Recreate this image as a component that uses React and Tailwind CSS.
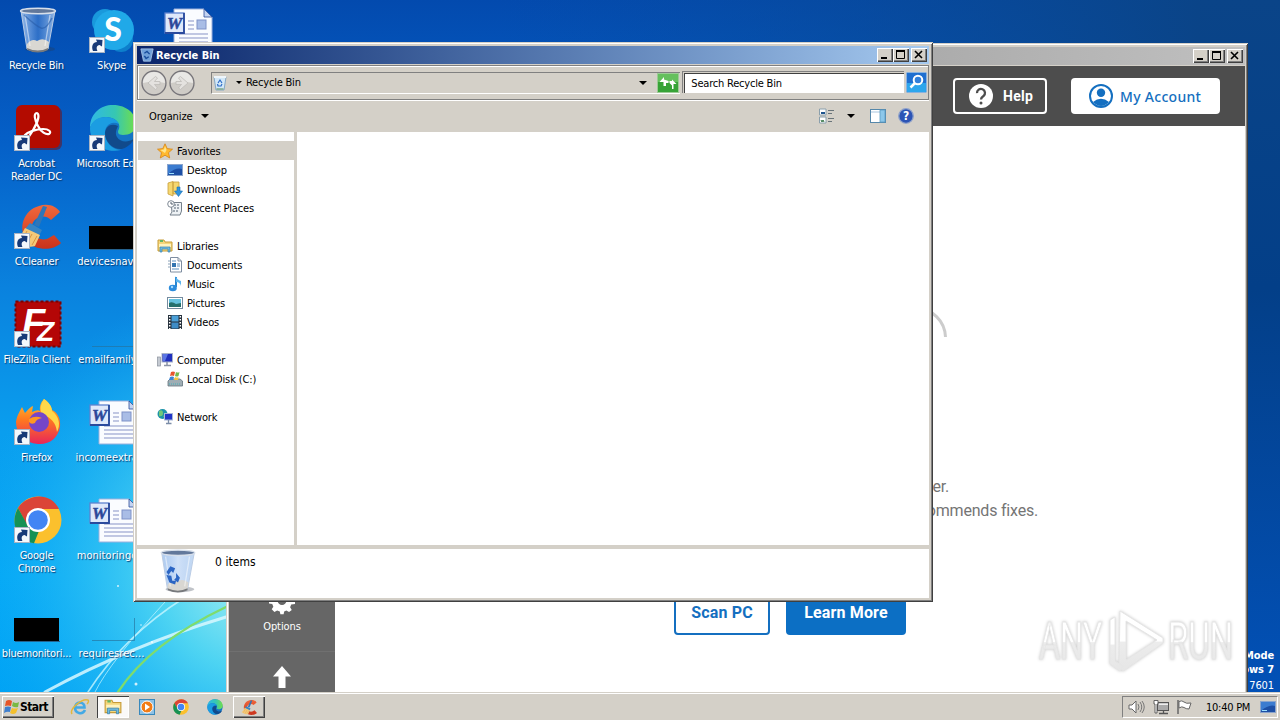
import React from 'react';
import clsx from 'clsx';

const UI = "font-['DejaVu_Sans_Condensed','DejaVu_Sans',sans-serif] text-[11px] leading-[13px] tracking-[-0.2px]";

/* ---------- desktop icons ---------- */

const Shortcut = () => (
  <g transform="translate(0 31)">
    <rect x="0.5" y="0.5" width="15" height="15" fill="#f4f8fc" stroke="#a9b4c4" />
    <path d="M4 14C2 9 4 5 8 5L7 2.500 13.500 3 13 9.500 10.500 8C7.500 8.500 7 11 8.500 14Z" fill="#173a78" />
  </g>
);

const Art = ({ children, shortcut }) => (
  <svg width="50" height="50" viewBox="0 0 50 50" className="block shrink-0 overflow-visible">
    {children}
    {shortcut && <Shortcut />}
  </svg>
);

const BinShape = ({ arrows }) => (
  <g>
    <ellipse cx="26" cy="43" rx="15" ry="3" fill="#303848" opacity=".3" />
    <path d="M7 5 13 43Q24 48 34 43L41 5Z" fill="url(#binGlass)" stroke="#b9cbe4" strokeWidth="1" />
    <path d="M13 38Q18 32 23 35 29 31 35 36L34 43Q24 47 13 43Z" fill="#d9d7d2" />
    <path d="M13 42Q24 47 34 42L34 44Q24 49 13.500 44Z" fill="#77797c" />
    <path d="M11 9 16 40M36 9 31 40" stroke="#fff" strokeWidth="1.300" opacity=".5" />
    <path d="M10 9Q22 20 27 22T38 12" stroke="#275ca8" fill="none" strokeWidth="1.500" opacity={arrows ? 0 : 0.6} />
    <ellipse cx="24" cy="5" rx="17.500" ry="2.800" fill="#62789b" stroke="#d7dfea" strokeWidth="1.400" />
    {arrows && (
      <g fill="#2c66c4">
        <path d="M12 25 16 19 21 21 19 26 17 24 14 28Z" />
        <path d="M12 28 17 29 18 34 22 34 21 38 15 36Z" />
        <path d="M22 26 26 31 24 36 20 33 22 31Z" />
      </g>
    )}
  </g>
);

const SkypeArt = () => (
  <Art shortcut>
    <circle cx="16" cy="16" r="13" fill="#1999dc" />
    <circle cx="32" cy="34" r="12" fill="#0d7fcc" />
    <circle cx="25" cy="24" r="20" fill="#20a9e8" />
    <text x="24" y="35" textAnchor="middle" fill="#fff" className="font-[Lato,sans-serif] text-[32px] font-black">S</text>
  </Art>
);

const WordArt = () => (
  <Art>
    <path d="M10 3H40L48 11V46H10Z" fill="#fafcff" stroke="#9bb0dc" />
    <path d="M40 3V11H48Z" fill="#c4d4f2" stroke="#2c4c98" strokeWidth=".8" />
    <path d="M24 15H30M24 19H30M24 23H30M15 28H44M15 32H44M15 36H44M15 40H44" stroke="#8793c6" />
    <rect x="33" y="14" width="9" height="9" fill="#a9bde6" stroke="#7f92c8" />
    <rect x="1" y="7" width="19" height="20" fill="#dfe8fa" stroke="#5f83cf" strokeWidth="1.300" />
    <path d="M1 27H20V7" stroke="#2a4a9d" fill="none" strokeWidth="1.800" />
    <text x="10.500" y="23" textAnchor="middle" fill="#2b4799" stroke="#2b4799" strokeWidth=".5" className="font-['Liberation_Serif',serif] text-[17px] font-bold italic">W</text>
  </Art>
);

const AcrobatArt = () => (
  <Art shortcut>
    <rect x="3" y="3" width="45" height="43" rx="6" fill="#7c0a05" opacity=".5" />
    <rect x="2" y="1" width="44" height="43" rx="6" fill="#b30b00" />
    <path d="M23 9C19 9 21 17 24 22 27 28 32 31 35 30 38 28 35 25 29 25 22 25 14 28 11 31 8 35 12 37 16 31 20 25 26 14 24 10Q23.500 9 23 9Z" fill="none" stroke="#fff" strokeWidth="2.200" />
  </Art>
);

const EdgeShape = () => (
  <g>
    <circle cx="24" cy="24" r="23" fill="#1474c4" />
    <path d="M1 24C1 9 12 1 24 1 38 1 47 10 47 20 47 28 40 31 34 31 29 31 28 28 30 25 32 18 25 13 17 13 9 13 3 18 1 24Z" fill="url(#edgeTop)" />
    <path d="M1 24C3 16 10 13 17 13 23 13 28 16 30 20 22 16 15 22 16 31 17 40 25 46 32 46 14 50 1 38 1 24Z" fill="#1b9de2" />
    <path d="M16 29C16 38 24 46 33 45 39 43 43 39 45 35 38 39 31 38 28 33 26 30 27 26 29 22 22 19 17 22 16 29Z" fill="#114a8b" />
  </g>
);

const CCleanerShape = () => (
  <g>
    <path d="M46 10 37 18C31 12 21 14 18 23 15 33 24 39 33 37L40 33 47 41C38 50 20 48 13 39 3 26 10 8 25 4 34 1 42 4 46 10Z" fill="url(#ccRed)" />
    <path d="M29 4 33 5 25 25 20 23Z" fill="#2e76b8" />
    <path d="M16 21 28 28 25 34 11 27Z" fill="#3685c4" />
    <path d="M11 26 26 33 21 44Q13 47 2 39 8 33 11 26Z" fill="#f4c978" />
    <path d="M13 29 7 40M18 32 12 43M23 34 18 43" stroke="#d69543" />
  </g>
);

const FileZillaArt = () => (
  <Art shortcut>
    <rect x="1.500" y="1.500" width="45" height="45" fill="#b40606" stroke="#7d0000" strokeWidth="2" strokeDasharray="3 2" />
    <text x="8" y="36" fill="#fff" className="font-['Liberation_Sans',sans-serif] text-[38px] font-bold italic">F</text>
    <text x="23" y="41" fill="#fff" className="font-['Liberation_Sans',sans-serif] text-[28px] font-bold italic">Z</text>
  </Art>
);

const FirefoxArt = () => (
  <Art shortcut>
    <path d="M30 1C36 5 37 9 38 12 43 14 47 20 46 29 44 40 35 47 24 46 10 45 2 36 2 24 3 17 6 13 8 9L11 15Q16 9 19 8L18 14Q24 11 26 13 25 6 30 1Z" fill="url(#foxFire)" />
    <path d="M30 1C37 6 38 10 38 13 45 18 47 27 43 34 42 25 37 19 29 17 24 11 28 5 30 1Z" fill="#ffd84a" />
    <circle cx="25" cy="24" r="10" fill="#7545c9" />
    <path d="M15 21Q21 17 28 20 22 21 21 25 17 27 15 24Z" fill="#ff9820" />
  </Art>
);

const ChromeShape = () => (
  <g>
    <circle cx="24" cy="24" r="23.500" fill="#fbc02d" />
    <path d="M4 12C14-3 37-4 45 13H24L13.500 30Z" fill="#db4437" />
    <path d="M4 12 14 30Q18 36 25 35L20 47.200C2 44-4 26 4 12Z" fill="#169154" />
    <circle cx="24" cy="24" r="12" fill="#fff" />
    <circle cx="24" cy="24" r="9.800" fill="#4285f4" />
  </g>
);

const BlackArt = () => <Art><rect x="0" y="24" width="45" height="23" fill="#000" /><path d="M1 47.500H46" stroke="#24618d" /></Art>;
const BlankArt = () => <Art><path d="M3 46.500H45.500V24" stroke="#26719b" fill="none" opacity=".65" /></Art>;

const desktopColumns = [
  [
    { label: 'Recycle Bin', art: <Art><BinShape /></Art> },
    { label: 'Acrobat Reader DC', art: <AcrobatArt /> },
    { label: 'CCleaner', art: <Art shortcut><CCleanerShape /></Art> },
    { label: 'FileZilla Client', art: <FileZillaArt /> },
    { label: 'Firefox', art: <FirefoxArt /> },
    { label: 'Google Chrome', art: <Art shortcut><ChromeShape /></Art> },
    { label: 'bluemonitori...', art: <BlackArt /> },
  ],
  [
    { label: 'Skype', art: <SkypeArt /> },
    { label: 'Microsoft Edge', art: <Art shortcut><EdgeShape /></Art> },
    { label: 'devicesnavi...', art: <BlackArt />, wide: true },
    { label: 'emailfamily...', art: <BlankArt />, wide: true },
    { label: 'incomeextra...', art: <WordArt />, wide: true },
    { label: 'monitoringc...', art: <WordArt />, wide: true },
    { label: 'requiresrec...', art: <BlankArt />, wide: true },
  ],
  [{ label: '', art: <WordArt /> }],
];

const DesktopIcon = ({ label, art, wide }) => (
  <div className="flex h-[98px] w-[75px] flex-col items-center">
    <div className="flex h-[53px] w-[50px] items-start pl-[2px]">{art}</div>
    <div
      className={clsx(
        'text-center text-white [text-shadow:1px_1px_1px_#0a3a70]',
        label.startsWith('Acrobat') || label.startsWith('Google') ? 'w-[56px]' : 'whitespace-nowrap',
        wide && 'tracking-[0.05px]',
      )}
    >
      {label}
    </div>
  </div>
);

const Wallpaper = () => (
  <svg width="1280" height="720" viewBox="0 0 1280 720" className="block">
    <defs>
      <linearGradient id="sky" x1="0" y1="0" x2="0" y2="1">
        <stop offset="0" stopColor="#034aae" />
        <stop offset=".2" stopColor="#0560c8" />
        <stop offset=".4" stopColor="#0a82de" />
        <stop offset=".6" stopColor="#0a9eee" />
        <stop offset=".8" stopColor="#04a8f6" />
        <stop offset="1" stopColor="#00a2f4" />
      </linearGradient>
      <linearGradient id="skyRight" x1="0" y1="0" x2="0" y2="1">
        <stop offset="0" stopColor="#0a4488" />
        <stop offset=".4" stopColor="#033f88" />
        <stop offset="1" stopColor="#0252ba" />
      </linearGradient>
      <radialGradient id="glow" cx="260" cy="570" r="290" gradientUnits="userSpaceOnUse">
        <stop offset="0" stopColor="#b6f3f0" />
        <stop offset=".35" stopColor="#5bdcf2" stopOpacity=".85" />
        <stop offset="1" stopColor="#14aef5" stopOpacity="0" />
      </radialGradient>
      <linearGradient id="fade">
        <stop offset="0" stopColor="#0a4f9f" stopOpacity="0" />
        <stop offset="1" stopColor="#0a4488" />
      </linearGradient>
      <linearGradient id="binGlass">
        <stop offset="0" stopColor="#a9c8ef" stopOpacity=".9" />
        <stop offset=".5" stopColor="#7aaaea" stopOpacity=".35" />
        <stop offset="1" stopColor="#b5d0f0" stopOpacity=".8" />
      </linearGradient>
      <linearGradient id="edgeTop">
        <stop offset="0" stopColor="#2fb8e6" />
        <stop offset=".55" stopColor="#36c7b2" />
        <stop offset="1" stopColor="#72df48" />
      </linearGradient>
      <linearGradient id="ccRed" x1="0" y1="0" x2="0" y2="1">
        <stop offset="0" stopColor="#f0683c" />
        <stop offset="1" stopColor="#c9321c" />
      </linearGradient>
      <linearGradient id="foxFire" x1="0" y1="0" x2="0" y2="1">
        <stop offset="0" stopColor="#ffc32e" />
        <stop offset=".45" stopColor="#ff7a1f" />
        <stop offset="1" stopColor="#e8255a" />
      </linearGradient>
    </defs>
    <rect width="1280" height="720" fill="url(#sky)" />
    <rect x="500" width="700" height="44" fill="url(#fade)" />
    <rect x="1200" width="80" height="720" fill="url(#skyRight)" />
    <rect width="560" height="720" fill="url(#glow)" />
    <g fill="none" strokeLinecap="round">
      <path d="M45 692Q130 646 226 617" stroke="#d8f8ff" strokeWidth="3" opacity=".85" />
      <path d="M88 692Q125 635 184 598" stroke="#c8f6ff" strokeWidth="1.500" opacity=".8" />
      <path d="M95 692Q110 662 165 602" stroke="#c8f6ff" strokeWidth="1" opacity=".7" />
      <path d="M118 692Q150 643 226 607" stroke="#7fdc6c" strokeWidth="2.300" />
    </g>
    <g fill="#fff" opacity=".8">
      <circle cx="118" cy="586" r="1" />
      <circle cx="136" cy="684" r="1.500" />
      <circle cx="152" cy="642" r="1" />
      <circle cx="141" cy="625" r=".8" />
    </g>
  </svg>
);

/* ---------- window chrome ---------- */

const frame = 'flex flex-col bg-[#d4d0c8] p-1 shadow-[inset_1px_1px_#d4d0c8,inset_-1px_-1px_#404040,inset_2px_2px_#fff,inset_-2px_-2px_#808080]';
const raised = 'bg-[#d4d0c8] shadow-[inset_1px_1px_#fff,inset_-1px_-1px_#404040,inset_-2px_-2px_#808080]';

const CaptionButtons = () => (
  <div className="flex h-[14px]">
    <div className={clsx('w-4', raised)}>
      <svg width="16" height="14"><path d="M4 10H10" stroke="#000" strokeWidth="2" /></svg>
    </div>
    <div className={clsx('mr-[2px] w-4', raised)}>
      <svg width="16" height="14"><path d="M3.500 3V10.500H11.500V3" stroke="#000" fill="none" /><path d="M3 3H12" stroke="#000" strokeWidth="2" /></svg>
    </div>
    <div className={clsx('w-4', raised)}>
      <svg width="16" height="14"><path d="M4 3 11 10M11 3 4 10" stroke="#000" strokeWidth="1.600" /></svg>
    </div>
  </div>
);

const Caret = ({ size = 8 }) => (
  <svg width={size} height={size / 2} viewBox="0 0 8 4" className="block"><path d="M0 0H8L4 4Z" fill="#000" /></svg>
);

const Icon16 = ({ children, size = 16 }) => (
  <svg width={size} height={size} viewBox="0 0 16 16" className="block shrink-0">{children}</svg>
);

const BinSmall = () => (
  <Icon16>
    <path d="M2 2H14L12 15H4Z" fill="#d3e8f8" stroke="#86a8c4" />
    <path d="M2 2H14" stroke="#eef5fa" strokeWidth="2" />
    <path d="M6 8 8 5 10 8M10 9 9 11H6L5.500 9" stroke="#2c6cc7" fill="none" strokeWidth="1.200" />
    <path d="M4.500 14H11.500" stroke="#7da78a" strokeWidth="1.500" />
  </Icon16>
);

const LibraryIcon = ({ size }) => (
  <Icon16 size={size}>
    <path d="M1 2H7L8 4H15V13H1Z" fill="#f4d77c" stroke="#c79c39" />
    <path d="M2 6H14V9H2Z" fill="#fff3bd" />
    <path d="M3 14V9H13V14H11V11H5V14Z" fill="#6ebbe0" stroke="#3883af" strokeWidth=".7" />
    <path d="M3 3H6" stroke="#63b766" strokeWidth="2" />
  </Icon16>
);

const ScreenIcon = () => (
  <Icon16>
    <rect x=".5" y="2.500" width="15" height="11" fill="#1d4fa5" stroke="#8aa4cc" />
    <path d="M1 3H15V7Q9 5 1 12Z" fill="#3c7cd0" />
    <path d="M2 11.500H7" stroke="#9ce0ff" />
  </Icon16>
);

const navIcons = {
  favorites: <Icon16><path d="M8 .8 10.200 5.600 15.500 6.200 11.500 9.700 12.700 15 8 12.200 3.300 15 4.500 9.700 .5 6.200 5.800 5.600Z" fill="#ffb92e" stroke="#d78416" strokeWidth=".8" /><path d="M8 3 9.500 7 8 10 3.500 7 7 6.500Z" fill="#ffe58d" /></Icon16>,
  desktop: <ScreenIcon />,
  downloads: <Icon16><path d="M1 2 6 .5V15L1 13ZM6 1H12V13H6Z" fill="#f5d770" stroke="#c8a03c" strokeWidth=".8" /><path d="M10 6H13V10H15.500L11.500 15.500 7.500 10H10Z" fill="#2f94df" stroke="#176cae" strokeWidth=".6" /></Icon16>,
  recent: <Icon16><path d="M4 2.500H14.500V11L13 15H3L5 12Z" fill="#eef2f5" stroke="#75808b" /><path d="M7 5H12M7 8H12M6 11H11" stroke="#87919c" strokeWidth="1.500" strokeDasharray="2 1" /><circle cx="4" cy="4" r="3.300" fill="#fff" stroke="#7e8994" /><path d="M4 2V4H6" stroke="#52616f" fill="none" /></Icon16>,
  libraries: <LibraryIcon />,
  documents: <Icon16><path d="M3.500 .5H11L14.500 4V15H3.500Z" fill="#fff" stroke="#7e8da0" /><path d="M11 .5V4H14" stroke="#7e8da0" fill="none" /><path d="M5 4H9M5 12H12M10 7H13M10 9H13" stroke="#5a8fbf" /><path d="M5 6H9V10H5Z" fill="#3274b0" /><path d="M1 4H4M1 7H4M1 10H4" stroke="#8ba2b8" /></Icon16>,
  music: <Icon16><path d="M9 1V11" stroke="#2685d1" strokeWidth="2" /><path d="M8.500 0Q10 4 14 5V10Q13 6 9 6Z" fill="#5eb5ee" /><ellipse cx="5.800" cy="12" rx="4" ry="3.300" fill="#2b8cdd" /><circle cx="5" cy="11" r="1.200" fill="#a2dcff" /></Icon16>,
  pictures: <Icon16><rect x=".5" y="2.500" width="15" height="11" fill="#fff" stroke="#748b9f" /><rect x="2" y="4" width="12" height="8" fill="#65c2df" /><path d="M2 12V8Q5 6 9 9L14 8V12Z" fill="#25706d" /></Icon16>,
  videos: <Icon16><rect x="1" y="1" width="14" height="14" fill="#26313c" /><rect x="4.500" y="1.500" width="7" height="6" fill="#4ba0d8" /><rect x="4.500" y="8.500" width="7" height="6" fill="#3e8cc6" /><path d="M2.700 2V15M13.300 2V15" stroke="#fff" strokeWidth="1.500" strokeDasharray="1.500 1.500" /></Icon16>,
  computer: <Icon16><rect x="5" y="1.500" width="10.500" height="8.500" fill="#2030bd" stroke="#a7b2ca" /><path d="M6 2H11L8 9H6Z" fill="#5a75e4" /><path d="M10 10V13M7 13.500H14" stroke="#8c95a7" strokeWidth="1.500" /><rect x=".5" y="5" width="3" height="9" fill="#c5cad2" stroke="#8b929d" strokeWidth=".7" /></Icon16>,
  disk: <Icon16><path d="M1 10 3 8H13L15.500 10V15H1Z" fill="#9fadb4" stroke="#63747e" strokeWidth=".8" /><path d="M2 13H14" stroke="#44b0b8" strokeDasharray="1 1" /><path d="M4 1Q6 0 8 1L7 5Q5 4 3 5Z" fill="#e8562d" /><path d="M9 1Q11 2 12.500 1L11.500 5Q10 6 8 5Z" fill="#74b84a" /><path d="M3 6Q5 5 7 6L6 9H2Z" fill="#3c83d5" /><path d="M8 6Q10 7 11.500 6L11 9H7Z" fill="#f6c53c" /></Icon16>,
  network: <Icon16><circle cx="5.500" cy="5" r="5" fill="#1c93a9" /><path d="M2 2Q6 0 6 4T2 7ZM6 7 9 6 8 9Z" fill="#71c77a" /><rect x="7.500" y="4.500" width="8" height="6.500" fill="#2135c7" stroke="#a9b8d8" /><path d="M11.500 11V14M9 14.500H14.500" stroke="#7c8da8" strokeWidth="1.300" /></Icon16>,
};

const navRows = [
  { label: 'Favorites', icon: 'favorites', top: true, active: true },
  { label: 'Desktop', icon: 'desktop' },
  { label: 'Downloads', icon: 'downloads' },
  { label: 'Recent Places', icon: 'recent' },
  null,
  { label: 'Libraries', icon: 'libraries', top: true },
  { label: 'Documents', icon: 'documents' },
  { label: 'Music', icon: 'music' },
  { label: 'Pictures', icon: 'pictures' },
  { label: 'Videos', icon: 'videos' },
  null,
  { label: 'Computer', icon: 'computer', top: true },
  { label: 'Local Disk (C:)', icon: 'disk' },
  null,
  { label: 'Network', icon: 'network', top: true },
];

const NavPane = () => (
  <div className="w-[157px] shrink-0 bg-white pt-[9px] pl-px tracking-[-0.13px]">
    {navRows.map((row, i) =>
      row ? (
        <div key={i} className={clsx('flex h-[19px] items-center gap-1', row.top ? 'pl-[19px]' : 'pl-[29px]', row.active && 'bg-[#d4d0c8]')}>
          {navIcons[row.icon]}
          <span className="pt-px">{row.label}</span>
        </div>
      ) : (
        <div key={i} className="h-[19px]" />
      ),
    )}
  </div>
);

const RoundArrow = ({ flip }) => (
  <svg width="28" height="28" viewBox="0 0 28 28" className={clsx('block', flip && '-scale-x-100')}>
    <circle cx="14" cy="14" r="12" fill="#cfccc7" stroke="#77757a" strokeWidth="1.300" />
    <path d="M3 14A11 11 0 0 1 25 14Q14 11 3 14Z" fill="#e9e8e5" />
    <path d="M20 12.500H14.500L17.500 9 15.500 7.500 8 14 15.500 20.500 17.500 19 14.500 15.500H20Z" fill="#e4e2df" stroke="#bebbb8" strokeWidth=".8" />
  </svg>
);

const ExplorerWindow = () => (
  <div className={clsx('absolute top-[42px] left-[133px] h-[560px] w-[800px]', frame)}>
    <div className="flex h-[18px] shrink-0 items-center bg-linear-to-r from-[#0a246a] to-[#a6caf0] pr-[2px] pl-[3px]">
      <Icon16 size={14}>
        <path d="M1 1H15L12 15H4Z" fill="#6f9fd8" stroke="#a6c3e6" />
        <path d="M5 6 8 4 11 7M10 10 7 12 5 9" stroke="#174c9c" fill="none" strokeWidth="1.600" />
      </Icon16>
      <span className="ml-[2px] flex-1 font-bold tracking-[-0.05px] text-white">Recycle Bin</span>
      <CaptionButtons />
    </div>
    <div className="mt-px flex h-[35px] shrink-0 items-center border border-[#808080] pr-px pl-[2px] shadow-[inset_1px_1px_#fff,0_1px_#fff]">
      <RoundArrow />
      <RoundArrow flip />
      <div className="ml-[15px] flex h-[22px] w-[470px] items-center border-t border-l border-[#808080] border-b border-b-white pr-px">
        <BinSmall />
        <span className="ml-[8px]"><Caret size={6} /></span>
        <span className="ml-[4px] flex-1">Recycle Bin</span>
        <Caret />
        <svg width="22" height="20" viewBox="0 0 22 20" className="ml-[10px]">
          <rect x=".5" y=".5" width="21" height="19" fill="#37a337" stroke="#9dcb96" />
          <rect x="1" y="1" width="20" height="8" fill="#65c05d" />
          <path d="M2.500 9 7 4V6.500L11.500 8V10H9V13H6.500V9ZM19.500 11 15 6.500V8H12.500V10L15 12.500V16H16.500V11Z" fill="#fff" />
        </svg>
      </div>
      <div className="ml-[3px] flex h-[22px] w-[222px] items-center border border-[#d4d0c8] bg-white pt-px pl-[7px] shadow-[inset_1px_1px_#404040,-1px_-1px_#808080]">Search Recycle Bin</div>
      <svg width="21" height="21" viewBox="0 0 21 21" className="ml-px">
        <rect x=".5" y=".5" width="20" height="20" rx="1" fill="#1f6fd0" stroke="#8ab3e0" />
        <path d="M1 11H20V20H1Z" fill="#2da6ec" />
        <circle cx="12" cy="8" r="4.300" fill="#3180da" stroke="#fff" strokeWidth="2" />
        <path d="M9 11 4.500 15.500" stroke="#fff" strokeWidth="2.500" />
      </svg>
    </div>
    <div className="flex h-8 shrink-0 items-center pr-[15px] pl-[12px]">
      <span className="mr-[8px] tracking-[-0.1px]">Organize</span>
      <Caret />
      <div className="flex-1" />
      <Icon16>
        <path d="M.5 1H7V7H.5ZM.5 9H7V15H.5Z" fill="#fff" stroke="#8a9fac" />
        <path d="M2 5H6" stroke="#1f558e" strokeWidth="2" />
        <path d="M2 12 3 14 4 12 5 14" stroke="#317143" fill="none" />
        <path d="M9 2.500H15M9 5.500H13M9 10.500H15M9 13.500H13" stroke="#69747a" />
      </Icon16>
      <span className="mr-[15px] ml-[12px]"><Caret /></span>
      <Icon16>
        <rect x=".5" y="1.500" width="15" height="13" fill="#fff" stroke="#5587aa" />
        <path d="M1 4H15" stroke="#a9c6df" />
        <rect x="10" y="2" width="5" height="12" fill="#8cc7ea" stroke="#5b9bc2" strokeWidth=".8" />
      </Icon16>
      <span className="ml-[12px]">
        <Icon16>
          <circle cx="8" cy="8" r="7.300" fill="#2c54b5" stroke="#8fa2ca" strokeWidth="1.300" />
          <text x="8" y="12.200" textAnchor="middle" fill="#fff" className="text-[12px] font-bold">?</text>
        </Icon16>
      </span>
    </div>
    <div className="flex h-[413px] shrink-0 bg-white">
      <NavPane />
      <div className="w-[3px] bg-[#d4d0c8]" />
    </div>
    <div className="h-1 shrink-0 bg-[#d4d0c8]" />
    <div className="flex flex-1 bg-white pl-[19px]">
      <svg width="44" height="46" viewBox="2 1 44 48" className="block"><BinShape arrows /></svg>
      <span className="mt-[7px] ml-[15px] text-[12px] tracking-[0.05px]">0 items</span>
    </div>
  </div>
);

/* ---------- CCleaner window ---------- */

const CleanerWindow = () => (
  <div className={clsx('absolute top-[43px] left-[226px] h-[660px] w-[1022px]', frame)}>
    <div className="-mr-px flex h-[18px] shrink-0 items-center justify-end bg-linear-to-r from-[#808080] to-[#c0c0c0] pr-[2px]">
      <CaptionButtons />
    </div>
    <div className="mt-px -mr-px -ml-px flex h-[60px] shrink-0 items-center justify-end gap-6 bg-[#4d4d4d] pr-[25px] font-[Roboto,sans-serif] text-[14px] font-bold">
      <div className="flex h-9 w-[94px] items-center rounded-[4px] border-2 border-white pl-[14px] tracking-[0.3px] text-white">
        <svg width="24" height="24" viewBox="0 0 24 24" className="mr-[10px]">
          <circle cx="12" cy="12" r="12" fill="#fff" />
          <path d="M8 9.200A4 4 0 1 1 14.500 12C12.800 13.200 12 13.600 12 15.500" stroke="#4d4d4d" strokeWidth="2.300" fill="none" />
          <circle cx="12" cy="19" r="1.500" fill="#4d4d4d" />
        </svg>
        Help
      </div>
      <div className="flex h-9 w-[149px] items-center rounded-[4px] bg-white pl-[18px] font-['Noto_Sans',sans-serif] font-medium tracking-[0.3px] text-[#146fc0]">
        <svg width="24" height="24" viewBox="0 0 24 24" className="mr-[7px]">
          <circle cx="12" cy="12" r="11" fill="none" stroke="#146fc0" strokeWidth="2" />
          <circle cx="12" cy="8.800" r="4.200" fill="#146fc0" />
          <path d="M4 18Q12 11.500 20 18 12 26 4 18Z" fill="#146fc0" />
        </svg>
        My Account
      </div>
    </div>
    <div className="-mr-px -ml-px flex flex-1 bg-white">
      <div className="flex w-[106px] flex-col items-center bg-[#666] pt-[466px] text-white">
        <svg width="26" height="26" viewBox="0 0 24 24">
          <path d="M10 1H14L14.600 4 17 5 19.500 3.500 22 6.500 20.300 9 21 11 24 12V15L20.500 15.500 19.500 18 21 20.500 18.500 22.500 16 21 14 22 13.500 24.500H10.500L10 22 7.500 21 5 22.500 2.500 20 4 17.500 3 15 0 14.500V11L3 10 4 7.500 2.500 5 5 2.500 7.500 4 9.500 3Z" fill="#fff" transform="translate(0 -4)" />
          <circle cx="12" cy="8" r="4" fill="#666" />
        </svg>
        <span className="mt-[2px] tracking-[-0.1px]">Options</span>
        <div className="mt-[18px] h-px w-full bg-[#707070]" />
        <svg width="18" height="22" viewBox="0 0 18 22" className="mt-[14px]"><path d="M9 0 18 10.500H12.500V22H5.500V10.500H0Z" fill="#fff" /></svg>
      </div>
      <div className="flex flex-1 flex-col items-center pt-[154px] font-[Roboto,sans-serif]">
        <svg width="320" height="60" viewBox="0 0 320 60" className="block">
          <path d="M302.500 2V11" stroke="#ccc" />
          <path d="M286 28A30 30 0 0 1 315.500 57" stroke="#ccc" strokeWidth="3" fill="none" />
        </svg>
        <div className="mt-[135px] h-6 w-[318px] text-right text-[16px] leading-6 text-[#757575]">er.</div>
        <div className="h-6 w-[496px] text-right text-[16px] leading-6 text-[#757575]">recommends fixes.</div>
        <div className="mt-[68px] flex gap-4 text-[16px] leading-6 font-bold tracking-[0.15px]">
          <div className="flex h-11 w-24 items-center justify-center rounded-[4px] border-2 border-[#146fc0] pb-px text-[#146fc0]">Scan PC</div>
          <div className="flex h-11 w-[120px] items-center justify-center rounded-[4px] bg-[#0c6fc4] pb-px text-white">Learn More</div>
        </div>
      </div>
    </div>
  </div>
);

const Watermark = () => (
  <svg width="200" height="70" viewBox="0 0 200 70" className="absolute top-[606px] left-[1036px]">
    <defs>
      <linearGradient id="mark" x1="0" y1="0" x2="0" y2="1">
        <stop offset="0" stopColor="#fff" />
        <stop offset=".5" stopColor="#fff" />
        <stop offset=".52" stopColor="#ececec" />
        <stop offset="1" stopColor="#e6e6e6" />
      </linearGradient>
    </defs>
    <g fill="url(#mark)" stroke="#e6e6e6" strokeWidth="1" className="font-[Roboto,sans-serif] text-[51px] drop-shadow-[0_0_1.5px_#c8c8c8]">
      <text x="3" y="53" textLength="63" lengthAdjust="spacingAndGlyphs">ANY</text>
      <text x="132" y="53" textLength="65" lengthAdjust="spacingAndGlyphs">RUN</text>
      <path fillRule="evenodd" d="M84 5 127 32V37L87 65 83 62ZM90 15V54L121 34Z" />
      <path d="M79 11 74 14V58L84 65 87 60 79 55V16Z" />
    </g>
  </svg>
);

/* ---------- taskbar ---------- */

const Taskbar = () => (
  <div className="absolute inset-x-0 bottom-0 flex h-7 items-center border-t border-[#d4d0c8] bg-[#d4d0c8] pt-px pr-[2px] pl-[2px] shadow-[inset_0_1px_#fff]">
    <div className={clsx('flex h-[22px] w-[52px] items-center pl-[2px] text-[12px] font-bold tracking-[-0.6px]', raised)}>
      <svg width="16" height="16" viewBox="0 0 16 16" className="shrink-0">
        <path d="M2 2Q5 0 8 2L7 7Q4 6 1 7Z" fill="#e65528" />
        <path d="M9 3Q12 5 15 3L14 8Q11 9 8 7Z" fill="#79b943" />
        <path d="M1 8Q4 7 7 8L6 13Q3 12 0 14Z" fill="#3f7fce" />
        <path d="M8 9Q11 10 14 9L12 14Q9 16 6 14Z" fill="#f4c02d" />
      </svg>
      Start
    </div>
    <svg width="20" height="20" viewBox="0 0 20 20" className="ml-[16px]">
      <path d="M15 13Q13 17 9 16 5 15 5 10.500 5.500 6 10 5.500 14.500 6 14.500 10.500H6" fill="none" stroke="#43a9e5" strokeWidth="2.600" />
      <path d="M2 17C-1 12 12 1 18 3 19 4 18 6 17 7" fill="none" stroke="#e2b73d" strokeWidth="1.500" />
    </svg>
    <div className="ml-[7px] flex h-[22px] w-8 items-center justify-center bg-[#faf9f8] shadow-[inset_1px_1px_#404040,inset_-1px_-1px_#fff]">
      <LibraryIcon size={18} />
    </div>
    <svg width="16" height="16" viewBox="0 0 16 16" className="ml-[10px]">
      <rect x=".5" y=".5" width="15" height="15" fill="#8dc1e5" stroke="#3888bc" />
      <circle cx="8" cy="8" r="6" fill="#f27c16" stroke="#fff" />
      <path d="M6 4.500 11 8 6 11.500Z" fill="#fff" />
    </svg>
    <svg width="16" height="16" viewBox="0 0 48 48" className="ml-[18px]"><ChromeShape /></svg>
    <svg width="16" height="16" viewBox="0 0 48 48" className="ml-[18px]"><EdgeShape /></svg>
    <div className={clsx('ml-[10px] flex h-[22px] w-8 items-center justify-center', raised)}>
      <svg width="17" height="17" viewBox="0 0 50 50"><CCleanerShape /></svg>
    </div>
    <div className="flex-1" />
    <div className="flex h-[22px] w-[156px] items-center border border-t-[#808080] border-r-white border-b-white border-l-[#808080] pl-[5px]">
      <svg width="18" height="16" viewBox="0 0 18 16">
        <path d="M1 6H4L8 2V14L4 10H1Z" fill="#fff" stroke="#666" />
        <path d="M10 5Q12 8 10 11M12 3Q15.500 8 12 13M14 2Q18.500 8 14 14" stroke="#777" fill="none" />
      </svg>
      <svg width="17" height="16" viewBox="0 0 17 16" className="ml-[7px]">
        <rect x="4.500" y="3.500" width="11" height="8" fill="#aaa" stroke="#555" />
        <path d="M6 14.500H15M10.500 12V15" stroke="#555" strokeWidth="1.300" />
        <path d="M1 1.500H5V5H4V14H2V5H1Z" fill="#fff" stroke="#555" strokeWidth=".9" />
        <path d="M6 4.500H15V6H6Z" fill="#eee" />
      </svg>
      <svg width="17" height="16" viewBox="0 0 17 16" className="ml-[6px]">
        <path d="M2 1V15" stroke="#666" strokeWidth="1.500" />
        <path d="M3 2.500Q6 1 8 3T15 4L13 10Q10 10 8 8.500T3 9Z" fill="#fff" stroke="#666" />
      </svg>
      <span className="ml-[13px] flex-1 whitespace-nowrap tracking-[-0.25px]">10:40 PM</span>
      <ScreenIcon />
      <span className="w-px" />
    </div>
  </div>
);

export default function App() {
  return (
    <div className={clsx('relative h-[720px] w-[1280px] overflow-hidden bg-[#0a5cc0] text-black', UI)}>
      <Wallpaper />
      <div className="absolute top-[6px] left-[-1px] flex">
        {desktopColumns.map((column, i) => (
          <div key={i} className="flex flex-col">
            {column.map((item, j) => <DesktopIcon key={j} {...item} />)}
          </div>
        ))}
      </div>
      <div className="absolute top-[649px] right-[6px] flex flex-col text-right leading-[14px] font-bold tracking-[-0.1px] text-white">
        <span>Safe Mode</span>
        <span>Windows 7</span>
        <span className="mt-[2px] font-normal">Build 7601</span>
      </div>
      <CleanerWindow />
      <ExplorerWindow />
      <Watermark />
      <Taskbar />
    </div>
  );
}
